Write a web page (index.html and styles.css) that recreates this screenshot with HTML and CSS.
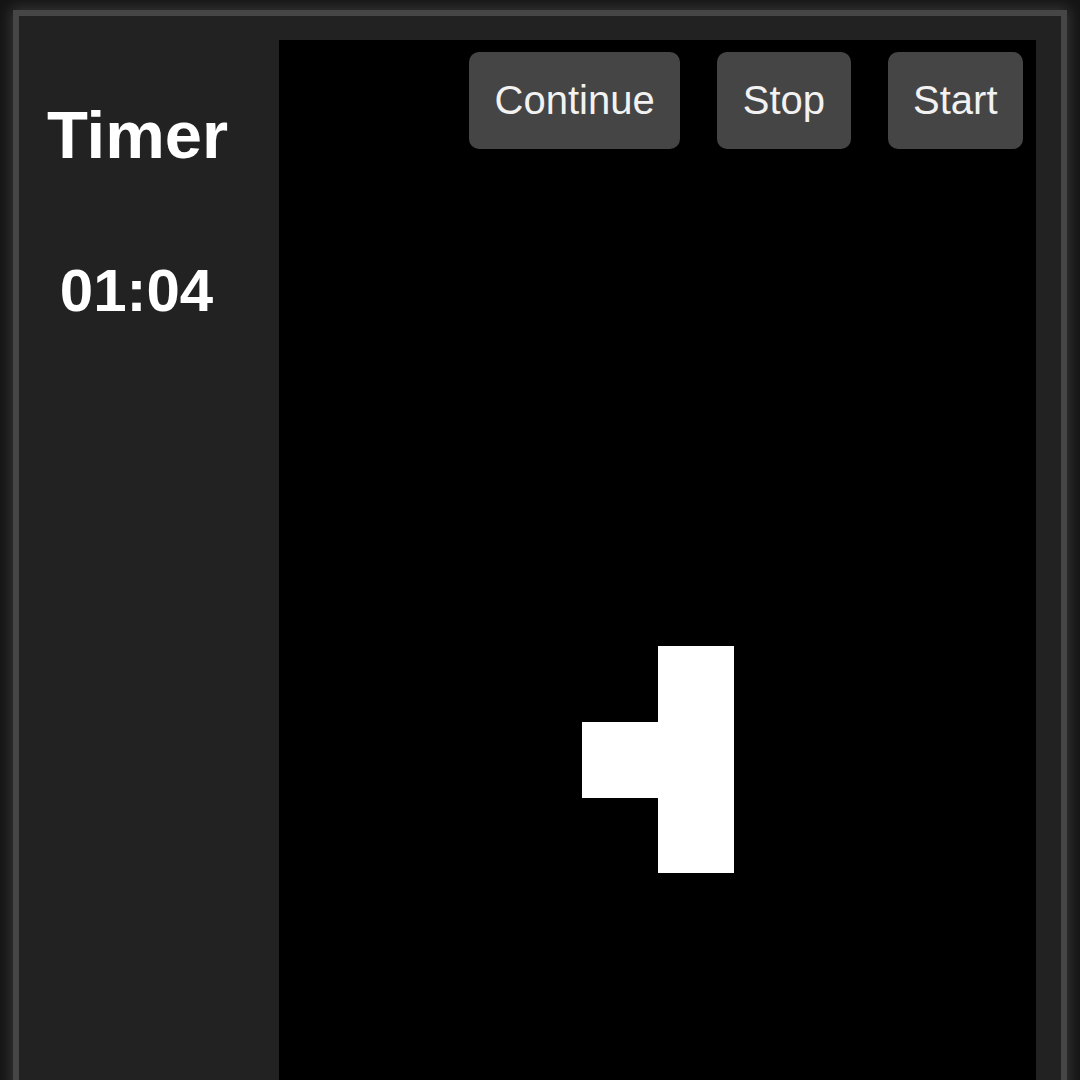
FILE: index.html
```html
<!DOCTYPE html>
<html lang="en">
<head>
<meta charset="utf-8">
<title>Tetris Timer</title>
<link rel="stylesheet" href="styles.css">
</head>
<body>
<div class="frame">
  <aside class="sidebar">
    <h1 class="title">Timer</h1>
    <div class="time">01:04</div>
  </aside>
  <main class="board">
    <div class="controls">
      <button class="btn">Continue</button>
      <button class="btn">Stop</button>
      <button class="btn">Start</button>
    </div>
    <div class="cell" style="left:303px;top:682px"></div>
    <div class="cell" style="left:379px;top:606px"></div>
    <div class="cell" style="left:379px;top:682px"></div>
    <div class="cell" style="left:379px;top:757px"></div>
  </main>
</div>
</body>
</html>
```

FILE: styles.css
```css
html, body {
  margin: 0;
  padding: 0;
  height: 1080px;
  overflow: hidden;
  background: #141414;
  font-family: "Liberation Sans", Arial, sans-serif;
}

.frame {
  box-sizing: border-box;
  margin: 10px 0 0 13px;
  width: 1054px;
  height: 1120px;
  border: 6px solid #464646;
  border-bottom: none;
  background: #222222;
  box-shadow: 0 0 14px 2px rgba(255, 255, 255, 0.16);
  padding: 24px 25px 0 0;
  display: flex;
}

.sidebar {
  width: 237px;
  padding-right: 23px;
  display: flex;
  flex-direction: column;
  align-items: center;
  color: #ffffff;
}

.title {
  margin: 62px 0 0;
  font-size: 67px;
  line-height: 66px;
  font-weight: bold;
}

.time {
  margin-top: 93px;
  font-size: 60px;
  line-height: 60px;
  font-weight: bold;
  margin-right: 2px;
}

.board {
  position: relative;
  width: 757px;
  background: #000000;
}

.controls {
  display: flex;
  justify-content: flex-end;
  gap: 37px;
  padding: 12px 13px 0 0;
}

.btn {
  font-family: "Liberation Sans", Arial, sans-serif;
  font-size: 40px;
  line-height: 47px;
  padding: 25px 25.5px;
  border: none;
  border-radius: 10px;
  background: #454545;
  color: #f2f2f2;
}

.cell {
  position: absolute;
  width: 76px;
  height: 76px;
  background: #ffffff;
}
```
